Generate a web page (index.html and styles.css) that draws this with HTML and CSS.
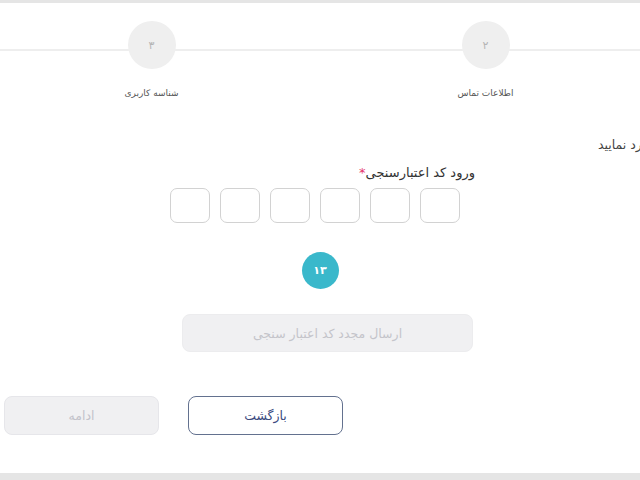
FILE: index.html
```html
<!DOCTYPE html>
<html lang="fa" dir="rtl">
<head>
<meta charset="utf-8">
<title>ورود کد اعتبارسنجی</title>
<link rel="stylesheet" href="styles.css">
</head>
<body>
<div class="band-top"></div>
<div class="stepper">
  <div class="steps">
    <div class="step step-off" aria-hidden="true"></div>
    <div class="step"><div class="step-dot">۲</div><div class="step-label">اطلاعات تماس</div></div>
    <div class="step"><div class="step-dot">۳</div><div class="step-label">شناسه کاربری</div></div>
    <div class="step step-off" aria-hidden="true"></div>
  </div>
</div>
<p class="hint"><bdi class="hint-text">کد ارسال شده را وارد نمایید</bdi></p>
<div class="field">
  <label class="field-label">ورود کد اعتبارسنجی<span class="req">*</span></label>
  <div class="otp">
    <input class="otp-box" maxlength="1">
    <input class="otp-box" maxlength="1">
    <input class="otp-box" maxlength="1">
    <input class="otp-box" maxlength="1">
    <input class="otp-box" maxlength="1">
    <input class="otp-box" maxlength="1">
  </div>
</div>
<div class="timer-row"><div class="timer">۱۳</div></div>
<button class="resend" disabled>ارسال مجدد کد اعتبار سنجی</button>
<div class="actions">
  <button class="btn btn-back">بازگشت</button>
  <button class="btn btn-next" disabled>ادامه</button>
</div>
<div class="band-bottom"></div>
</body>
</html>
```
FILE: styles.css
```css
html, body {
  margin: 0;
  padding: 0;
  background: #ffffff;
  overflow: hidden;
  height: 480px;
}
body {
  direction: rtl;
  font-family: "DejaVu Sans", "Noto Sans", sans-serif;
  color: #333;
}
.band-top {
  height: 3px;
  background: #e5e5e5;
}
.stepper {
  position: relative;
  padding-top: 18px;
  height: 100px;
  overflow: hidden;
}
.stepper::before {
  content: "";
  position: absolute;
  left: 0;
  right: 0;
  top: 46px;
  height: 2px;
  background: #eeeeee;
}
.steps {
  display: flex;
  justify-content: center;
  direction: rtl;
  margin-left: -3px;
}
.step {
  flex: 0 0 334px;
  display: flex;
  flex-direction: column;
  align-items: center;
  position: relative;
}
.step-dot {
  width: 48px;
  height: 48px;
  border-radius: 50%;
  background: #efefef;
  color: #b5b5b5;
  font-size: 11px;
  display: flex;
  align-items: center;
  justify-content: center;
}
.step-label {
  margin-top: 17px;
  font-size: 9px;
  line-height: 14px;
  color: #555;
}
.hint {
  direction: ltr;
  margin: 16px 0 0 0;
  padding-left: 598px;
  font-size: 12.5px;
  line-height: 16px;
  color: #444;
  white-space: nowrap;
}
.hint-text {
  direction: rtl;
  unicode-bidi: isolate;
}
.field {
  width: 306px;
  margin: 10px 165px 0 0;
}
.field-label {
  display: block;
  font-size: 13px;
  line-height: 20px;
  color: #333;
}
.req {
  color: #e4336a;
}
.otp {
  display: flex;
  gap: 10px;
  padding-right: 15px;
  margin-top: 5px;
}
.otp-box {
  width: 40px;
  height: 35px;
  box-sizing: border-box;
  border: 1.5px solid #d2d2d2;
  border-radius: 7px;
  padding: 0;
  background: #fff;
}
.timer-row {
  display: flex;
  justify-content: center;
  margin-top: 29px;
}
.timer {
  width: 37px;
  height: 37px;
  border-radius: 50%;
  background: #3ab8cb;
  color: #fff;
  font-size: 11px;
  font-weight: bold;
  display: flex;
  align-items: center;
  justify-content: center;
}
.resend {
  display: block;
  width: 291px;
  height: 38px;
  margin: 25px 167px 0 0;
  border: 1px solid #ececee;
  border-radius: 8px;
  background: #f0f0f2;
  color: #c4c4ca;
  font-family: inherit;
  font-size: 12.5px;
}
.actions {
  display: flex;
  gap: 29px;
  margin: 44px 297px 0 0;
}
.btn {
  width: 155px;
  height: 39px;
  border-radius: 8px;
  font-family: inherit;
  font-size: 12.5px;
}
.btn-back {
  border: 1.5px solid #63718f;
  background: #fff;
  color: #3a4a80;
}
.btn-next {
  border: 1px solid #e6e6ea;
  background: #f0f0f2;
  color: #c2c2ca;
}
.band-bottom {
  margin-top: 38px;
  height: 7px;
  background: #e5e5e5;
}
```
